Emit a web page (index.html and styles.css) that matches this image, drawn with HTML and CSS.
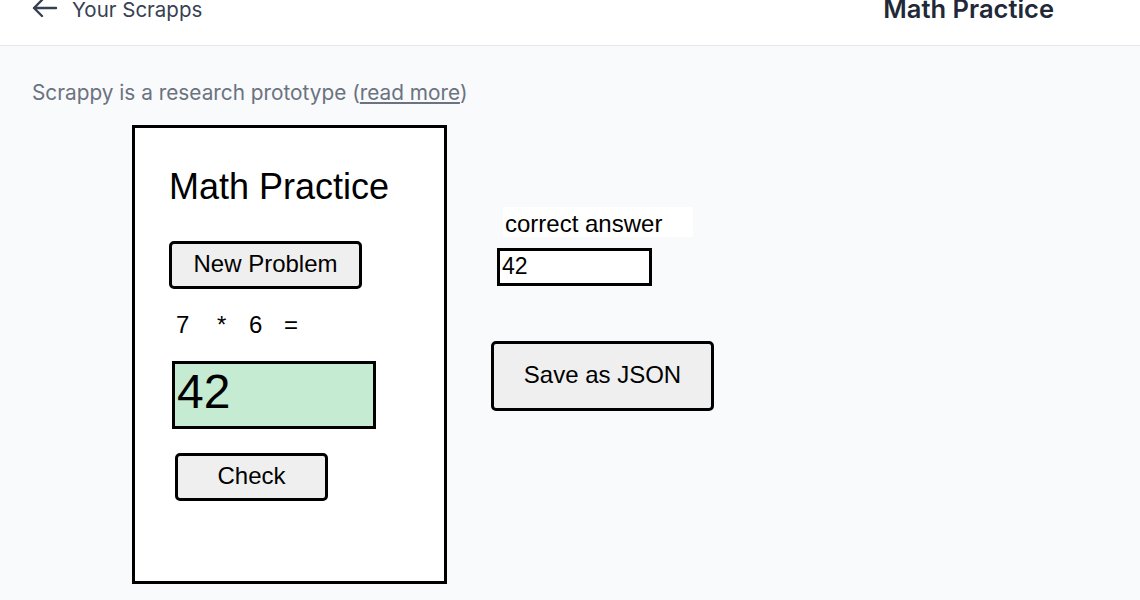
FILE: index.html
```html
<!DOCTYPE html>
<html lang="en">
<head>
<meta charset="utf-8">
<title>Math Practice</title>
<link rel="stylesheet" href="styles.css">
</head>
<body>
<header class="topbar">
  <a class="back" href="#">
    <svg class="back-icon" viewBox="0 0 26 20" width="26" height="20" fill="none" stroke="currentColor" stroke-width="2.4" stroke-linecap="round" stroke-linejoin="round"><path d="M24 9H2M10 1L2 9l8 8"/></svg>
    <span>Your Scrapps</span>
  </a>
  <h1 class="app-title">Math Practice</h1>
</header>
<main class="main">
  <p class="notice">Scrappy is a research prototype (<a href="#">read more</a>)</p>
  <div class="canvas">
    <div class="frame">
      <div class="w-title">Math Practice</div>
      <button class="btn btn-new">New Problem</button>
      <span class="w-num n1">7</span>
      <span class="w-num n2">*</span>
      <span class="w-num n3">6</span>
      <span class="w-num n4">=</span>
      <input class="answer" type="text" value="42">
      <button class="btn btn-check">Check</button>
    </div>
    <div class="label-correct">correct answer</div>
    <input class="correct-input" type="text" value="42">
    <button class="btn btn-save">Save as JSON</button>
  </div>
</main>
</body>
</html>
```

FILE: styles.css
```css
* { box-sizing: border-box; }

html, body {
  margin: 0;
  padding: 0;
}

body {
  background: #f9fafb;
  font-family: Inter, "Noto Sans", sans-serif;
  overflow: hidden;
  height: 600px;
}

.topbar {
  height: 46px;
  background: #ffffff;
  border-bottom: 1px solid #e5e7eb;
  display: flex;
  justify-content: space-between;
  align-items: flex-start;
  padding: 0 86px 0 32px;
}

.back {
  display: flex;
  align-items: flex-start;
  gap: 14px;
  color: #374151;
  text-decoration: none;
  font-size: 20.5px;
  line-height: 20px;
  margin-top: 0;
}

.back-icon {
  margin-top: -1px;
  color: #374151;
}

.app-title {
  margin: -1px 0 0 0;
  font-size: 25.5px;
  line-height: 20px;
  font-weight: 600;
  color: #1f2937;
}

.main {
  padding: 0 32px;
}

.notice {
  margin: 0;
  padding-top: 35px;
  height: 60px;
  margin-bottom: 4px;
  font-size: 20.8px;
  line-height: 24px;
  color: #6b7280;
}

.notice a {
  color: #6b7280;
  text-decoration: underline;
}

.canvas {
  position: relative;
  margin: 0 -32px;
  height: 490px;
  font-family: "Liberation Sans", Arial, sans-serif;
  color: #000;
}

.frame {
  position: absolute;
  left: 132px;
  top: 15px;
  width: 315px;
  height: 459px;
  background: #ffffff;
  border: 3px solid #000;
}

.w-title {
  position: absolute;
  left: 34px;
  top: 38px;
  font-size: 36px;
  line-height: 42px;
}

.btn {
  position: absolute;
  background: #efefef;
  border: 3px solid #000;
  border-radius: 5px;
  font-family: "Liberation Sans", Arial, sans-serif;
  font-size: 24px;
  color: #000;
  padding: 0 0 3px 0;
}

.btn-new {
  left: 34px;
  top: 113px;
  width: 193px;
  height: 48px;
}

.btn-check {
  left: 40px;
  top: 325px;
  width: 153px;
  height: 48px;
}

.w-num {
  position: absolute;
  top: 183px;
  font-size: 24px;
  line-height: 28px;
}

.n1 { left: 41px; }
.n2 { left: 82px; }
.n3 { left: 114px; }
.n4 { left: 149px; }

.answer {
  position: absolute;
  left: 37px;
  top: 233px;
  width: 204px;
  height: 68px;
  background: #c5ebd3;
  border: 3px solid #000;
  font-family: "Liberation Sans", Arial, sans-serif;
  font-size: 48px;
  padding: 0 3px 7px 2px;
  color: #000;
  outline: none;
}

.label-correct {
  position: absolute;
  left: 503px;
  top: 97px;
  width: 190px;
  height: 30px;
  background: #ffffff;
  padding: 3px 0 0 2px;
  font-size: 24px;
  line-height: 27px;
}

.correct-input {
  position: absolute;
  left: 497px;
  top: 138px;
  width: 155px;
  height: 38px;
  background: #ffffff;
  border: 3px solid #000;
  font-family: "Liberation Sans", Arial, sans-serif;
  font-size: 23px;
  padding: 0 2px 2px 2px;
  color: #000;
  outline: none;
}

.btn-save {
  left: 491px;
  top: 231px;
  width: 223px;
  height: 70px;
}
```
